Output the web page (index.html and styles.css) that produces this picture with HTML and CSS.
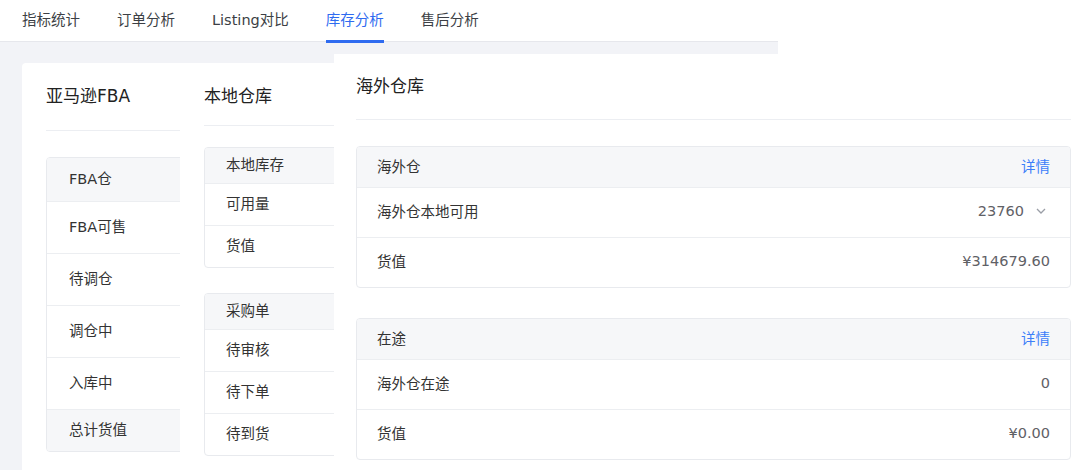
FILE: index.html
```html
<!DOCTYPE html>
<html lang="zh-CN">
<head>
  <meta charset="UTF-8" />
  <meta name="viewport" content="width=device-width, initial-scale=1.0"/>
  <title>库存分析</title>
  <link rel="stylesheet" href="styles.css">
</head>
<body>
  <div class="tabs">
    <span class="tab">指标统计</span>
    <span class="tab">订单分析</span>
    <span class="tab">Listing对比</span>
    <span class="tab active">库存分析</span>
    <span class="tab">售后分析</span>
  </div>

  <div class="stage">
    <!-- 亚马逊FBA -->
    <div class="panel p1">
      <div class="inner">
        <div class="title">亚马逊FBA</div>
        <div class="table">
          <div class="row head">FBA仓</div>
          <div class="row">FBA可售</div>
          <div class="row">待调仓</div>
          <div class="row">调仓中</div>
          <div class="row">入库中</div>
          <div class="row total">总计货值</div>
        </div>
      </div>
    </div>

    <!-- 本地仓库 -->
    <div class="panel p2">
      <div class="inner">
        <div class="title">本地仓库</div>
        <div class="table">
          <div class="row head">本地库存</div>
          <div class="row">可用量</div>
          <div class="row">货值</div>
        </div>
        <div class="table">
          <div class="row head">采购单</div>
          <div class="row">待审核</div>
          <div class="row">待下单</div>
          <div class="row">待到货</div>
        </div>
      </div>
    </div>

    <!-- 海外仓库 -->
    <div class="panel p3">
      <div class="title">海外仓库</div>
      <div class="table">
        <div class="row head"><span>海外仓</span><a class="link">详情</a></div>
        <div class="row">
          <span>海外仓本地可用</span>
          <span class="val">23760
            <svg class="chev" width="10" height="6" viewBox="0 0 10 6"><polyline points="1,1 5,5 9,1" fill="none" stroke="#9a9ea6" stroke-width="1.3"/></svg>
          </span>
        </div>
        <div class="row"><span>货值</span><span class="val">¥314679.60</span></div>
      </div>
      <div class="table">
        <div class="row head"><span>在途</span><a class="link">详情</a></div>
        <div class="row"><span>海外仓在途</span><span class="val">0</span></div>
        <div class="row"><span>货值</span><span class="val">¥0.00</span></div>
      </div>
    </div>
  </div>
</body>
</html>
```

FILE: styles.css
```css
body { margin: 0; overflow: hidden; background: #fff; font-family: "DejaVu Sans", "Noto Sans CJK SC", sans-serif; font-size: 14.5px; color: #333; }

/* tabs */
.tabs { position: relative; z-index: 1; display: flex; gap: 37px; height: 41px; padding-left: 22px; }
.tab { box-sizing: border-box; height: 43px; padding-top: 9px; line-height: 22px; color: #3c3f45; border-bottom: 3px solid transparent; }
.tab.active { color: #2f6bf0; border-bottom-color: #2f6bf0; }

/* grey area */
.stage { display: flex; align-items: flex-start; width: 778px; height: 429px; background: #f2f3f7; border-top: 1px solid #e6e7ec; box-sizing: border-box; }
.panel { flex-shrink: 0; background: #fff; overflow: hidden; }
.title { font-size: 17px; line-height: 24px; color: #222; border-bottom: 1px solid #eceef2; }

.table { border: 1px solid #e8eaee; border-radius: 4px; overflow: hidden; }
.row { box-sizing: border-box; display: flex; align-items: center; justify-content: space-between; border-top: 1px solid #eceef1; }
.row:first-child { border-top: 0; }
.row.head, .row.total { background: #f6f7f9; }

/* 亚马逊FBA */
.p1 { margin: 21px 0 0 22px; width: 158px; height: 408px; border-radius: 4px 0 0 0; }
.p1 .inner { width: 320px; padding-left: 24px; }
.p1 .title { padding: 21px 0 22px; }
.p1 .table { margin-top: 26px; }
.p1 .row { height: 52px; padding: 0 0 5px 22px; }
.p1 .row.head { height: 43px; }
.p1 .row.total { height: 42px; }

/* 本地仓库 */
.p2 { margin-top: 21px; width: 154px; height: 408px; }
.p2 .inner { width: 320px; padding-left: 24px; }
.p2 .title { padding: 21px 0 17px; }
.p2 .table { margin-top: 21px; }
.p2 .table + .table { margin-top: 25px; }
.p2 .row { height: 42px; padding: 0 0 4px 21px; }
.p2 .row.head { height: 35px; }

/* 海外仓库 */
.p3 { margin-top: 12px; width: 746px; height: 420px; padding: 0 9px 0 22px; box-sizing: border-box; }
.p3 .title { padding: 20px 0 21px; }
.p3 .table { margin-top: 26px; }
.p3 .table + .table { margin-top: 30px; }
.p3 .row { height: 50px; padding: 0 20px 4px 20px; }
.p3 .row.head { height: 40px; }
.link { color: #3d7ef9; }
.val { display: flex; align-items: center; color: #5f6166; }
.chev { margin: 0 4px 0 12px; }
```
